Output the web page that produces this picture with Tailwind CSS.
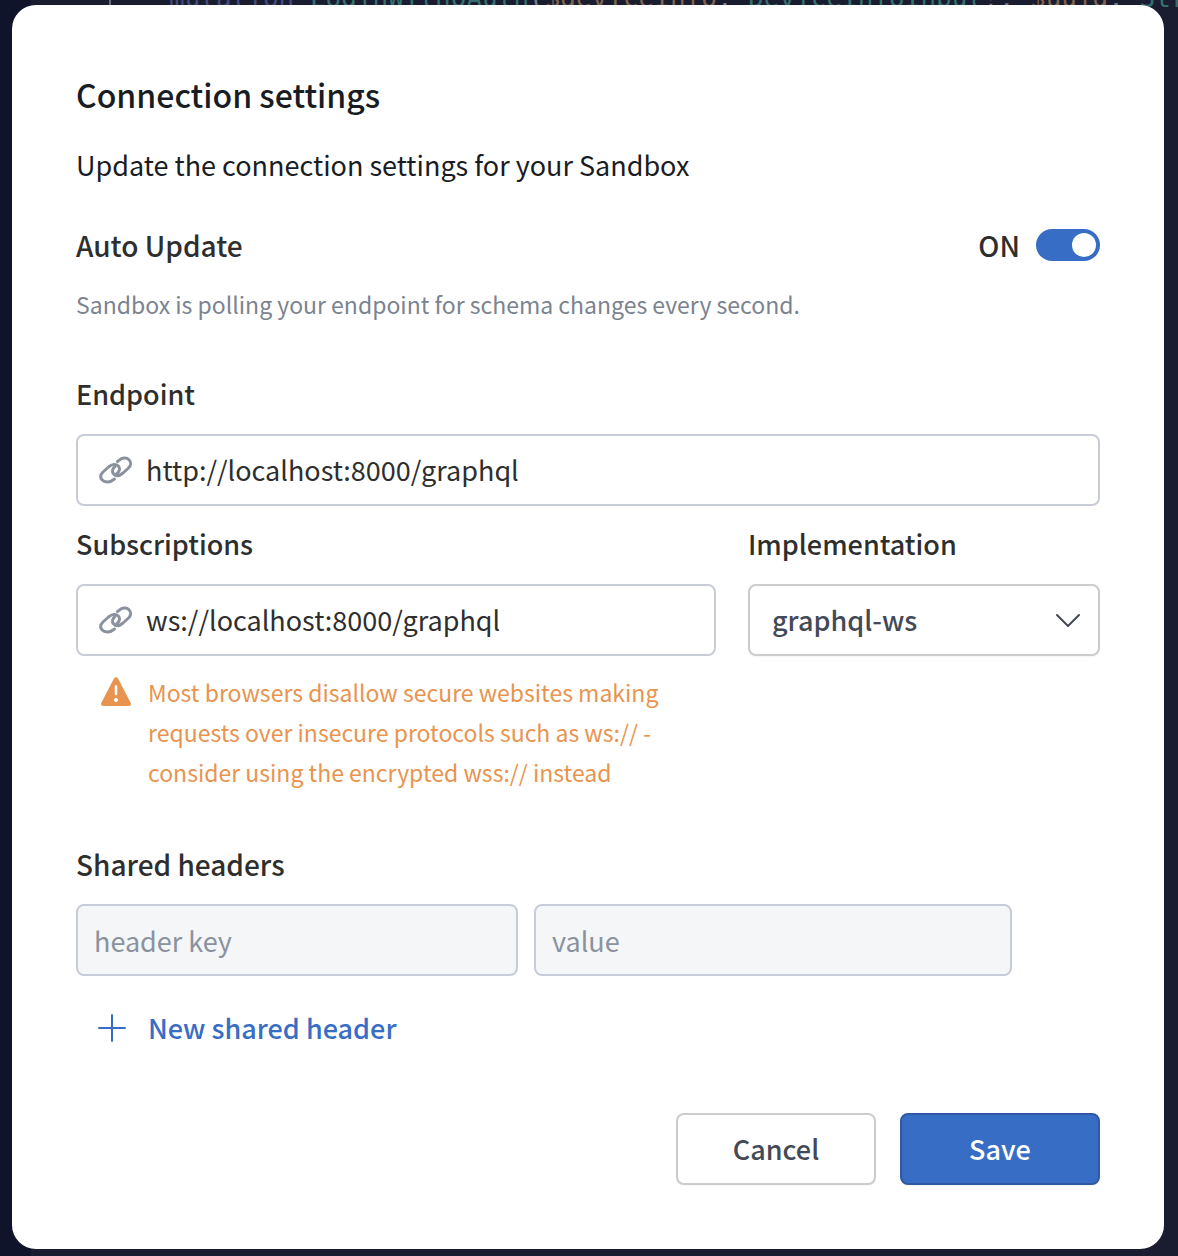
<!DOCTYPE html>
<html lang="en">
<head>
<meta charset="utf-8">
<title>Connection settings</title>
<script src="https://cdn.jsdelivr.net/npm/@tailwindcss/browser@4"></script>
</head>
<body class="relative min-h-screen overflow-x-hidden bg-[#10142a] font-['Noto_Sans_CJK_SC',sans-serif] text-[#2e2e2e]">
  <!-- Dimmed editor behind the dialog -->
  <div class="absolute inset-y-0 right-0 left-[31px] overflow-hidden bg-[#1a1d2f]" aria-hidden="true">
    <div class="-mt-[18px] ml-[78px] border-l-2 border-[#6b6c78] pl-[58px] font-['DejaVu_Sans_Mono',monospace] text-[26px] leading-8 whitespace-pre text-[#777a88]"><span class="text-[#434b80]">mutation</span> <span class="text-[#35706f]">LoginWithOAuth</span>(<span class="text-[#80634f]">$deviceInfo</span>: <span class="text-[#35706f]">DeviceInfoInput</span>!, <span class="text-[#80634f]">$uuid</span>: <span class="text-[#35706f]">String</span></div>
  </div>

  <main class="relative pt-[5px] pr-[14px] pb-[7px] pl-3">
    <form role="dialog" aria-labelledby="title" class="rounded-3xl bg-white px-16 pt-[65px] pb-16" onsubmit="return false">
      <h1 id="title" class="text-[32px] leading-12 font-medium text-[#191c23]">Connection settings</h1>
      <p class="mt-[27px] text-[27px] leading-10 text-[#191c23]">Update the connection settings for your Sandbox</p>

      <div class="mt-10 flex items-center justify-between">
        <label for="auto" class="text-[28px] leading-10 font-medium">Auto Update</label>
        <div class="flex items-center gap-4">
          <span class="text-[28px] leading-10 font-medium">ON</span>
          <span class="relative flex h-8 w-16">
            <input id="auto" type="checkbox" role="switch" checked class="peer h-8 w-16 appearance-none rounded-full bg-[#9098a3] checked:bg-[#386dc6]">
            <span class="pointer-events-none absolute top-1 left-1 size-6 rounded-full bg-white peer-checked:left-9"></span>
          </span>
        </div>
      </div>
      <p class="mt-[19px] text-[23px] leading-10 text-[#7b8390]">Sandbox is polling your endpoint for schema changes every second.</p>

      <label for="endpoint" class="mt-[50px] block text-[27px] leading-10 font-medium">Endpoint</label>
      <div class="mt-5 flex h-18 items-center gap-3 rounded-lg border-2 border-[#c8ccd6] px-5">
        <svg class="h-9 w-9 shrink-0" viewBox="0 0 36 36" fill="none" stroke="#8a929e" stroke-width="3" stroke-linecap="round" stroke-linejoin="round"><path d="M16.500 27L15 28C12 30.500 6.500 30.500 4.200 28C1.800 25.500 2.500 22.500 5 20L10.500 15C14 12 18 11.500 20.300 14C22.500 16.500 21.500 20 18.500 22"/><path d="M19.500 9.500L21 8.300C24 5.700 28.500 5.200 31 7.700C33.500 10.200 33 13.500 30.500 16L25 21C21.500 24 18 24.500 15.700 22C13.500 19.500 14.500 16.500 17 14.500"/></svg>
        <input id="endpoint" type="text" value="http://localhost:8000/graphql" class="min-w-0 flex-1 text-[27px] leading-10 outline-none">
      </div>

      <div class="mt-[18px] grid grid-cols-[20fr_11fr] gap-x-8">
        <div>
          <label for="subs" class="block text-[27px] leading-10 font-medium">Subscriptions</label>
          <div class="mt-5 flex h-18 items-center gap-3 rounded-lg border-2 border-[#c8ccd6] px-5">
            <svg class="h-9 w-9 shrink-0" viewBox="0 0 36 36" fill="none" stroke="#8a929e" stroke-width="3" stroke-linecap="round" stroke-linejoin="round"><path d="M16.500 27L15 28C12 30.500 6.500 30.500 4.200 28C1.800 25.500 2.500 22.500 5 20L10.500 15C14 12 18 11.500 20.300 14C22.500 16.500 21.500 20 18.500 22"/><path d="M19.500 9.500L21 8.300C24 5.700 28.500 5.200 31 7.700C33.500 10.200 33 13.500 30.500 16L25 21C21.500 24 18 24.500 15.700 22C13.500 19.500 14.500 16.500 17 14.500"/></svg>
            <input id="subs" type="text" value="ws://localhost:8000/graphql" class="min-w-0 flex-1 text-[27px] leading-10 outline-none">
          </div>
          <div class="mt-4 flex gap-4 px-6 text-[#e8944f]">
            <svg class="mt-1 h-8 w-8 shrink-0" viewBox="0 0 32 32"><path d="M14 2.500Q16 0 18 2.500L30.800 27Q31.800 30 28 30H4Q.2 30 1.200 27Z" fill="#e8944f"/><path d="M16 10.500V18" stroke="#fff" stroke-width="2.600" stroke-linecap="round"/><circle cx="16" cy="24" r="2" fill="#fff"/></svg>
            <p class="text-[23px] leading-10">Most browsers disallow secure websites making requests over insecure protocols such as ws:// - consider using the encrypted wss:// instead</p>
          </div>
        </div>
        <div>
          <label for="impl" class="block text-[27px] leading-10 font-medium">Implementation</label>
          <div class="relative mt-5">
            <select id="impl" class="h-18 w-full appearance-none rounded-lg border-2 border-[#cccccc] bg-white px-[22px] text-[27px] leading-10 font-medium text-[#434956] shadow-xs"><option>graphql-ws</option><option>subscriptions-transport-ws</option></select>
            <svg class="pointer-events-none absolute top-6 right-5 size-6" viewBox="0 0 24 24" fill="none" stroke="#434956" stroke-width="2" stroke-linecap="round" stroke-linejoin="round"><path d="M1 7L12 18L23 7"/></svg>
          </div>
        </div>
      </div>

      <fieldset class="mt-13">
        <legend class="text-[28px] leading-10 font-medium">Shared headers</legend>
        <div class="mt-5 mr-[88px] grid grid-cols-[442fr_478fr] gap-4">
          <input type="text" aria-label="Header key" placeholder="header key" class="h-18 min-w-0 rounded-lg border-2 border-[#c8ccd6] bg-[#f4f6f8] px-4 text-[27px] leading-10 placeholder:text-[#8a929e]">
          <input type="text" aria-label="Header value" placeholder="value" class="h-18 min-w-0 rounded-lg border-2 border-[#c8ccd6] bg-[#f4f6f8] px-4 text-[27px] leading-10 placeholder:text-[#8a929e]">
        </div>
        <button type="button" class="mt-8 flex items-center gap-5 px-5 text-[27px] leading-10 font-medium text-[#386dc6]">
          <svg class="size-8" viewBox="0 0 32 32" stroke="#386dc6" stroke-width="2" stroke-linecap="round"><path d="M16 3V29M3 16H29"/></svg>
          New shared header
        </button>
      </fieldset>

      <div class="mt-[65px] flex justify-end gap-6">
        <button type="button" class="h-18 w-50 rounded-lg border-2 border-[#cccccc] bg-white text-[27px] leading-10 font-medium text-[#434956] shadow-xs">Cancel</button>
        <button type="submit" class="h-18 w-50 rounded-lg border-2 border-[#3059a5] bg-[#386dc6] text-[27px] leading-10 font-medium text-white shadow-xs">Save</button>
      </div>
    </form>
  </main>
</body>
</html>
